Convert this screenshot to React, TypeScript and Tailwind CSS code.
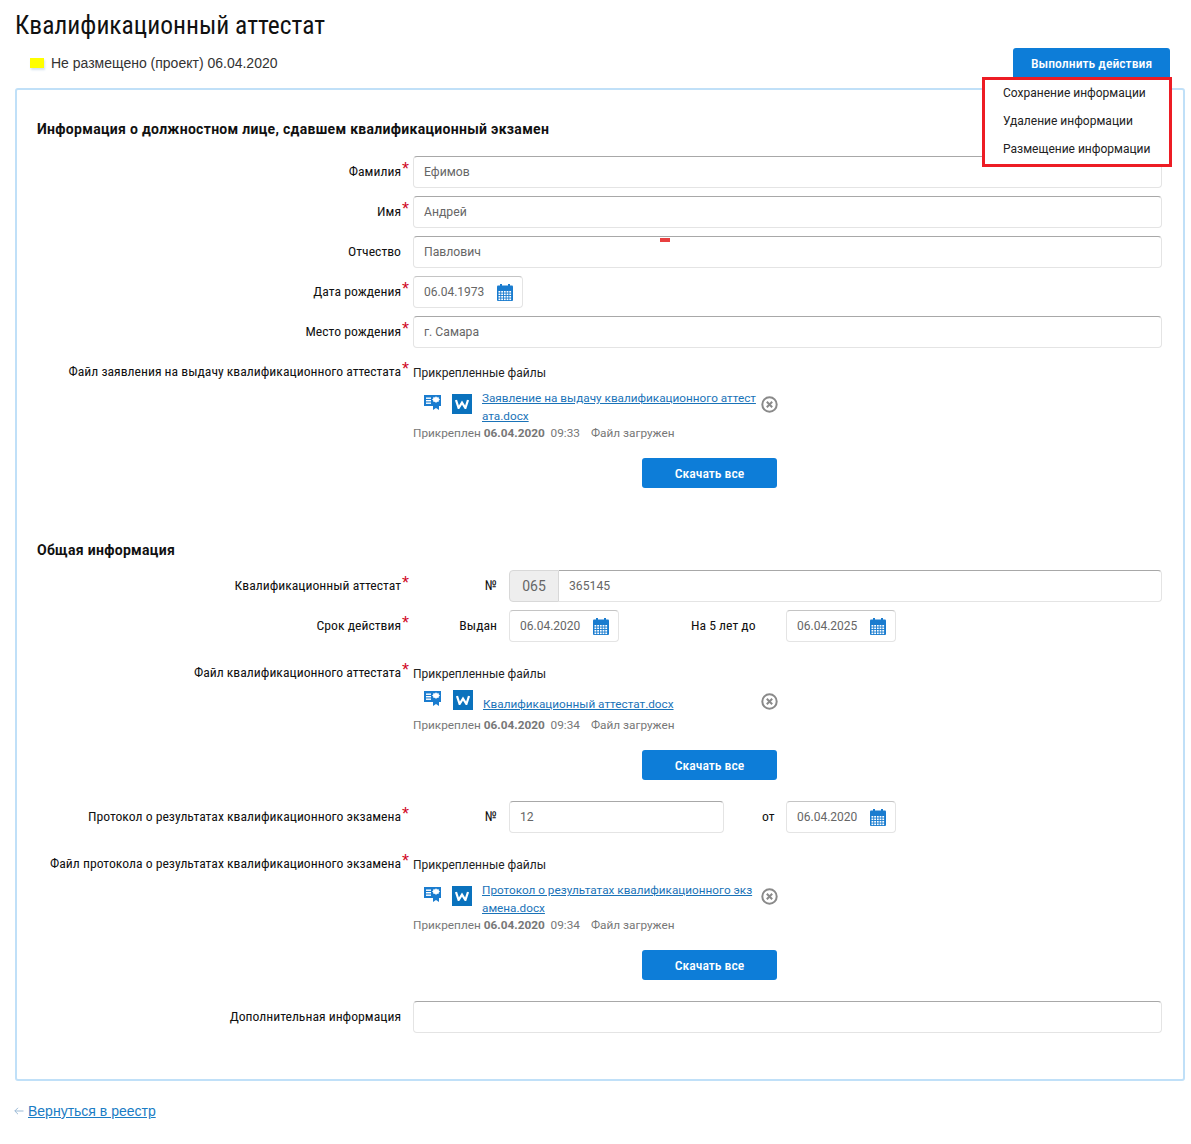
import React from 'react';

const cond = "font-['Roboto',sans-serif] [font-stretch:75%]";

function CalendarIcon() {
  return (
    <svg width="16" height="17" viewBox="0 0 16 17" className="shrink-0">
      <rect x="3" y="0" width="2" height="3" fill="#1a7ccf" />
      <rect x="11" y="0" width="2" height="3" fill="#1a7ccf" />
      <rect x="0" y="1.5" width="16" height="15.5" rx="1" fill="#1a7ccf" />
      <g fill="#fff">
        {[7, 9.5, 12, 14.5].map((y) =>
          [1.5, 4.2, 6.9, 9.6, 12.3].map((x) => <rect key={`${x}-${y}`} x={x} y={y} width="1.8" height="1.6" />),
        )}
      </g>
    </svg>
  );
}

function CertIcon() {
  return (
    <svg width="17" height="16" viewBox="0 0 17 16" className="shrink-0">
      <rect x="0" y="1" width="17" height="11" fill="#1a7ccf" />
      <rect x="2" y="3.5" width="5" height="1.4" fill="#fff" />
      <rect x="2" y="6" width="5" height="1.4" fill="#fff" />
      <rect x="2" y="8.5" width="5" height="1.4" fill="#fff" />
      <path d="M9 10 L9 16 L12 14 L15 16 L15 10 Z" fill="#1a7ccf" />
      <path d="M12 2.2l1 1.2 1.5-.3.3 1.5 1.2 1-1.2 1-.3 1.5-1.5-.3-1 1.2-1-1.2-1.5.3-.3-1.5-1.2-1 1.2-1 .3-1.5 1.5.3z" fill="#fff" />
    </svg>
  );
}

function WordIcon() {
  return (
    <div className="w-5 h-5 bg-[#0a72bd] flex items-center justify-center shrink-0">
      <svg width="14" height="10" viewBox="0 0 14 10">
        <path d="M1 1 L3.6 9 L7 3.6 L10.4 9 L13 1" fill="none" stroke="#fff" strokeWidth="2.2" />
      </svg>
    </div>
  );
}

function RemoveIcon() {
  return (
    <svg width="17" height="17" viewBox="0 0 17 17" className="shrink-0">
      <circle cx="8.5" cy="8.5" r="7.2" fill="none" stroke="#8a8a8a" strokeWidth="2" />
      <path d="M5.8 5.8 L11.2 11.2 M11.2 5.8 L5.8 11.2" stroke="#8a8a8a" strokeWidth="2" />
    </svg>
  );
}

function Row({ label, required, children, className = '' }: { label: string; required?: boolean; children: React.ReactNode; className?: string }) {
  return (
    <div className={`flex ${className}`}>
      <div className="w-[396px] shrink-0 pr-[12px] h-8 flex items-center justify-end relative">
        <span className={`${cond} text-[13.7px] text-[#111] pb-[2px]`}>{label}</span>
        {required && <span className="absolute right-[4px] top-[4px] text-[#d0021b] text-[18px] leading-[18px]">*</span>}
      </div>
      <div className="flex-1 min-w-0">{children}</div>
    </div>
  );
}

function TextField({ value, className = '' }: { value?: string; className?: string }) {
  return (
    <div className={`h-8 px-[10px] flex items-center rounded-[4px] border border-[#e4e4e4] border-t-[#a8a8a8] text-[12.2px] text-[#666] font-['Roboto',sans-serif] ${className}`}>
      {value}
    </div>
  );
}

function DateField({ value }: { value: string }) {
  return (
    <div className="w-[110px] h-8 pl-[10px] pr-[9px] flex items-center justify-between rounded-[4px] border border-[#e4e4e4] border-t-[#c4c4c4] text-[12px] text-[#666] font-['Roboto',sans-serif] shrink-0">
      {value}
      <CalendarIcon />
    </div>
  );
}

function Files({ name, time, twoLine }: { name: string; time: string; twoLine?: boolean }) {
  return (
    <div>
      <div className="h-[33px] flex items-center text-[12px] text-[#222] font-['Roboto',sans-serif]">Прикрепленные файлы</div>
      <div className={`flex ${twoLine ? 'h-9 pl-[11px]' : 'h-7 pl-[11px]'}`}>
        <div className={`w-[28px] ${twoLine ? 'pt-[5px]' : 'pt-0'}`}><CertIcon /></div>
        <div className={twoLine ? 'pt-[5px]' : 'pt-0 pl-[1px]'}><WordIcon /></div>
        <a href="#" className={`ml-[10px] break-all text-[11.75px] leading-[18px] underline text-[#1a73b8] font-['Roboto',sans-serif] ${twoLine ? 'w-[275px]' : 'w-[274px] pt-[5px]'}`}>{name}</a>
        <div className={`ml-[4px] ${twoLine ? 'pt-[7px]' : 'pt-[3px]'}`}><RemoveIcon /></div>
      </div>
      <div className={`flex text-[11.8px] text-[#777] h-4 items-center font-['Roboto',sans-serif] ${twoLine ? 'mt-[1px]' : ''}`}>
        <span className="w-[178px]">Прикреплен <b className="font-bold">06.04.2020</b>&nbsp; {time}</span>
        <span>Файл загружен</span>
      </div>
      <div className="mt-[16px] ml-[229px]">
        <button className={`${cond} w-[135px] h-[30px] rounded-[3px] bg-[#0d7dd8] text-white text-[13.7px] font-medium`}>Скачать все</button>
      </div>
    </div>
  );
}

export default function App() {
  return (
    <div className="w-[1191px] h-[1144px] bg-white pl-[15px] pr-[6px] relative font-['Liberation_Sans',sans-serif]">
      <h1 className={`${cond} h-12 pt-[2px] flex items-center text-[25.5px] text-[#111]`}>Квалификационный аттестат</h1>

      <div className="flex items-center h-[29px] pl-[15px] pr-[15px] justify-between relative">
        <div className="flex items-center">
          <span className="w-[14px] h-[10px] bg-[#ffff00] shadow-[1px_2px_2px_#d5e3f0]"></span>
          <span className="ml-[7px] pt-[2px] text-[14px] text-[#333]">Не размещено (проект) 06.04.2020</span>
        </div>
        <button className={`${cond} w-[157px] h-[29px] pt-[2px] rounded-t-[3px] bg-[#0d7dd8] text-white text-[13.7px] font-medium`}>Выполнить действия</button>
        {/* выпадающее меню */}
        <div className="absolute z-10 right-[13px] top-[29px] w-[190px] h-[90px] bg-white border-[3px] border-[#ed1c24] pl-[18px] text-[12px] text-[#222] font-['Roboto',sans-serif]">
          <div className="h-7 pb-[2px] flex items-center">Сохранение информации</div>
          <div className="h-7 pb-[2px] flex items-center">Удаление информации</div>
          <div className="h-7 pb-[2px] flex items-center">Размещение информации</div>
        </div>
      </div>

      <div className="mt-[11px] border-2 border-[#c0e0f8] rounded-[3px] pl-0 pr-[21px] pt-[30px] pb-[46px] relative">
        <h2 className="pl-[20px] h-[18px] flex items-center text-[14px] tracking-[0.3px] font-bold text-[#111] font-['Roboto',sans-serif] mb-[18px]">Информация о должностном лице, сдавшем квалификационный экзамен</h2>

        <div className="flex flex-col gap-2">
          <Row label="Фамилия" required><TextField value="Ефимов" /></Row>
          <Row label="Имя" required><TextField value="Андрей" /></Row>
          <Row label="Отчество"><TextField value="Павлович" /></Row>
          <Row label="Дата рождения" required><DateField value="06.04.1973" /></Row>
          <Row label="Место рождения" required><TextField value="г. Самара" /></Row>
          <Row label="Файл заявления на выдачу квалификационного аттестата" required>
            <Files name="Заявление на выдачу квалификационного аттестата.docx" time="09:33" twoLine />
          </Row>
        </div>

        <h2 className="mt-[53px] mb-[11px] pl-[20px] h-[18px] flex items-center text-[14px] tracking-[0.3px] font-bold text-[#111] font-['Roboto',sans-serif]">Общая информация</h2>

        <div className="flex flex-col">
          <Row label="Квалификационный аттестат" required>
            <div className="flex items-center">
              <span className={`${cond} w-[84px] text-right text-[13.7px] text-[#111] mr-[12px] pb-[2px]`}>№</span>
              <div className="flex-1 flex h-8">
                <div className="w-[50px] flex items-center justify-center bg-[#eeeeee] border border-[#d8d8d8] rounded-l-[4px] text-[14px] text-[#666] font-['Roboto',sans-serif]">065</div>
                <TextField value="365145" className="flex-1 rounded-l-none border-l-0" />
              </div>
            </div>
          </Row>
          <Row label="Срок действия" required className="mt-2">
            <div className="flex items-center">
              <span className={`${cond} w-[84px] text-right text-[13.7px] text-[#111] mr-[12px] pb-[2px]`}>Выдан</span>
              <DateField value="06.04.2020" />
              <span className={`${cond} ml-[72px] w-[65px] text-[13.7px] text-[#111] whitespace-nowrap pb-[2px]`}>На 5 лет до</span>
              <div className="ml-[30px]"><DateField value="06.04.2025" /></div>
            </div>
          </Row>
          <Row label="Файл квалификационного аттестата" required className="mt-[15px]">
            <Files name="Квалификационный аттестат.docx" time="09:34" />
          </Row>
          <Row label="Протокол о результатах квалификационного экзамена" required className="mt-[21px]">
            <div className="flex items-center">
              <span className={`${cond} w-[84px] text-right text-[13.7px] text-[#111] mr-[12px] pb-[2px]`}>№</span>
              <TextField value="12" className="w-[215px]" />
              <span className={`${cond} ml-[38px] w-[24px] text-[13.7px] text-[#111] pb-[2px]`}>от</span>
              <DateField value="06.04.2020" />
            </div>
          </Row>
          <Row label="Файл протокола о результатах квалификационного экзамена" required className="mt-[15px]">
            <Files name="Протокол о результатах квалификационного экзамена.docx" time="09:34" twoLine />
          </Row>
          <Row label="Дополнительная информация" className="mt-[21px]"><TextField /></Row>
        </div>

        {/* красная метка поверх поля */}
        <span className="absolute left-[643px] top-[148px] w-[10px] h-1 bg-[#e84040]"></span>
      </div>

      <div className="mt-[20px] h-5 flex items-center -ml-[1px] text-[14px]">
        <svg width="14" height="10" viewBox="0 0 14 10" className="shrink-0">
          <path d="M9.5 5 H0.8 M4 1.8 L0.8 5 L4 8.2" fill="none" stroke="#9dbbd6" strokeWidth="1" />
        </svg>
        <a href="#" className="underline text-[#1a7cc4]">Вернуться в реестр</a>
      </div>
    </div>
  );
}
